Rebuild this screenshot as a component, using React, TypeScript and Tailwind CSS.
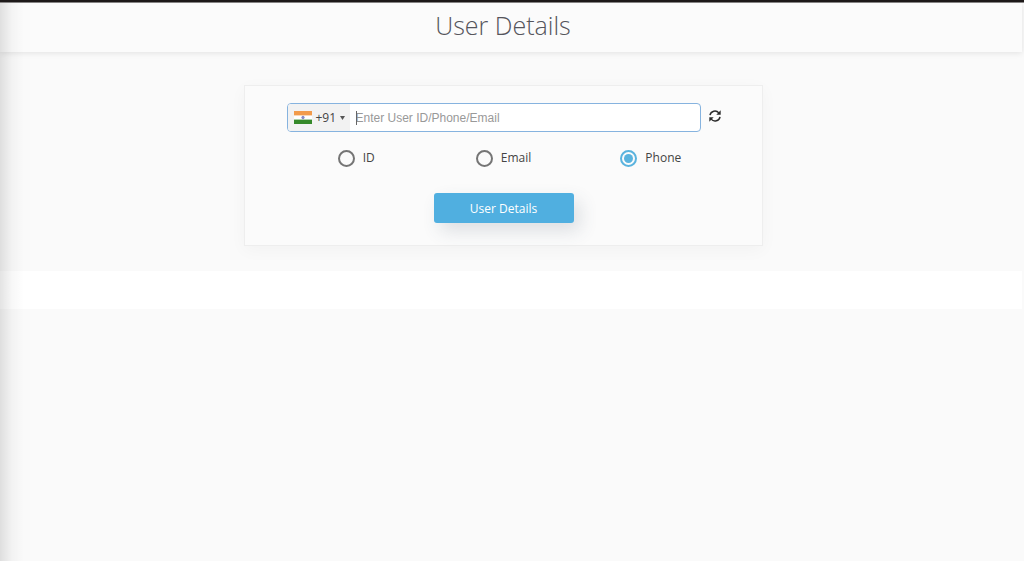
import { useState } from "react";

const MODES = ["ID", "Email", "Phone"];

function IndiaFlag() {
  return (
    <svg viewBox="0 0 18 13" className="h-[13px] w-[18px] shrink-0" aria-hidden="true">
      <rect width="18" height="13" fill="#fff" />
      <rect width="18" height="4.4" fill="#f29b4b" />
      <rect y="8.6" width="18" height="4.4" fill="#35892a" />
      <circle cx="9" cy="6.5" r="1.3" fill="#8c8fc9" stroke="#5c62ae" strokeWidth="0.5" />
    </svg>
  );
}

function RefreshIcon() {
  return (
    <svg
      viewBox="0 0 12 12"
      className="h-3 w-3"
      fill="none"
      stroke="#2b2b2b"
      strokeWidth="1.5"
      aria-hidden="true"
    >
      <path d="M1 5.2A5 5 0 0 1 9.8 2.9" />
      <path d="M11 6.8A5 5 0 0 1 2.2 9.1" />
      <path d="M11.7 0.3V4.7H7.3Z" fill="#2b2b2b" stroke="none" />
      <path d="M0.3 11.7V7.3H4.7Z" fill="#2b2b2b" stroke="none" />
    </svg>
  );
}

export default function App() {
  const [mode, setMode] = useState("Phone");
  const [query, setQuery] = useState("");

  return (
    <div className="relative min-h-screen overflow-hidden bg-[#fafafa] font-['Open_Sans',sans-serif] text-[#444]">
      <div className="h-[3px] border-b border-[#8a8888] bg-[#1e1a1a]" />
      <div className="mr-0.5">
        <header className="bg-[#fbfbfb] pt-1 pr-4 pb-[9px] shadow-[0_1px_6px_rgba(0,0,0,0.1)]">
          <h1 className="text-center text-[25px] leading-9 font-light text-[#55555b]">User Details</h1>
        </header>

        <main>
          <div className="pt-[33px] pr-4 pb-[25px]">
            <form
              onSubmit={(event) => event.preventDefault()}
              className="mx-auto flex max-w-[519px] flex-col items-center border border-[#eeeeee] bg-[#fbfbfb] pt-[17px] pr-[37px] pb-[22px] pl-[38px] shadow-[0_4px_16px_rgba(0,0,0,0.035)]"
            >
              <div className="flex w-full items-center gap-2 px-1">
                <div className="flex h-[29px] flex-1 overflow-hidden rounded border border-[#86b3df] bg-white">
                  <button
                    type="button"
                    aria-label="Country code"
                    className="flex w-[62px] shrink-0 items-center bg-[#f2f2f2] pl-1.5 text-xs text-[#444]"
                  >
                    <IndiaFlag />
                    <span className="ml-1 w-5">+91</span>
                    <svg viewBox="0 0 5 4" className="ml-1 h-1 w-[5px]" aria-hidden="true">
                      <path d="M0 0H5L2.5 4Z" fill="#555" />
                    </svg>
                  </button>
                  <div className="relative flex-1">
                    <input
                      type="text"
                      aria-label="User ID, phone or email"
                      placeholder="Enter User ID/Phone/Email"
                      value={query}
                      onChange={(event) => setQuery(event.target.value)}
                      className="h-full w-full bg-transparent px-1.5 font-['Liberation_Sans',sans-serif] text-xs text-[#444] caret-transparent outline-none placeholder:text-[#999]"
                    />
                    {query === "" && (
                      <span className="pointer-events-none absolute top-[7px] left-[6px] h-3.5 w-px bg-[#666]" />
                    )}
                  </div>
                </div>
                <button
                  type="button"
                  aria-label="Reset"
                  onClick={() => setQuery("")}
                  className="flex h-7 w-3 items-start justify-center pt-1.5"
                >
                  <RefreshIcon />
                </button>
              </div>

              <div className="mt-4 grid w-full grid-cols-3">
                {MODES.map((item) => (
                  <label key={item} className="flex items-center justify-center gap-2 text-xs leading-5">
                    <input
                      type="radio"
                      name="mode"
                      checked={mode === item}
                      onChange={() => setMode(item)}
                      className="h-[17px] w-[17px] appearance-none rounded-full border-2 border-[#757575] bg-clip-content p-[2px] checked:border-[#5ab3de] checked:bg-[#5ab3de]"
                    />
                    {item}
                  </label>
                ))}
              </div>

              <button
                type="submit"
                className="mt-[25px] h-[30px] w-[140px] rounded-[3px] bg-[#50afe0] pt-px text-xs text-white shadow-[6px_8px_18px_rgba(60,80,100,0.16)]"
              >
                User Details
              </button>
            </form>
          </div>
          <div className="h-[38px] bg-white" />
        </main>
      </div>
      <div className="pointer-events-none absolute top-[3px] bottom-0 left-0 w-6 bg-linear-to-r from-black/11 via-black/3 to-transparent" />
    </div>
  );
}
